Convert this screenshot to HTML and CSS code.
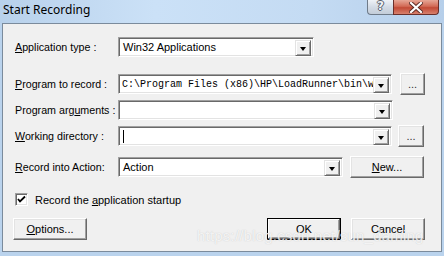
FILE: index.html
```html
<!DOCTYPE html>
<html lang="en">
<head>
    <meta charset="UTF-8">
    <title>Start Recording</title>
    <link rel="stylesheet" href="styles.css">
</head>
<body>
    <div class="window">
        <div class="titlebar">
            <div class="title">Start Recording</div>
            <div class="caption-btns">
                <div class="cap-help">?</div>
                <div class="cap-close">
                    <svg width="14" height="11" viewBox="0 0 14 11">
                        <path d="M2 1 L12 10 M12 1 L2 10" stroke="#5a2a24" stroke-width="4" stroke-linecap="square"/>
                        <path d="M2 1 L12 10 M12 1 L2 10" stroke="#fff" stroke-width="2.2" stroke-linecap="square"/>
                    </svg>
                </div>
            </div>
        </div>
        <div class="client">
            <div class="row row-1">
                <label class="lbl"><u>A</u>pplication type :</label>
                <div class="combo w-type">
                    <span class="combo-text">Win32 Applications</span>
                    <span class="drop"></span>
                </div>
            </div>
            <div class="row row-2">
                <label class="lbl"><u>P</u>rogram to record :</label>
                <div class="combo w-long">
                    <span class="combo-text mono">C:\Program Files (x86)\HP\LoadRunner\bin\wlrun.exe</span>
                    <span class="drop"></span>
                </div>
                <button class="btn btn-dots">...</button>
            </div>
            <div class="row row-3">
                <label class="lbl">Program arg<u>u</u>ments :</label>
                <div class="combo w-args">
                    <span class="combo-text"></span>
                    <span class="drop"></span>
                </div>
            </div>
            <div class="row row-4">
                <label class="lbl"><u>W</u>orking directory :</label>
                <div class="combo w-long">
                    <span class="combo-text"><span class="caret"></span></span>
                    <span class="drop"></span>
                </div>
                <button class="btn btn-dots btn-dots2">...</button>
            </div>
            <div class="row row-5">
                <label class="lbl"><u>R</u>ecord into Action:</label>
                <div class="combo w-action">
                    <span class="combo-text">Action</span>
                    <span class="drop"></span>
                </div>
                <button class="btn btn-new"><u>N</u>ew...</button>
            </div>
            <div class="check-row">
                <span class="checkbox">
                    <svg width="9" height="9" viewBox="0 0 9 9">
                        <path d="M1 4 L3 6.5 L8 1.5" stroke="#000" stroke-width="1.8" fill="none"/>
                    </svg>
                </span>
                <span class="check-lbl">Record the <u>a</u>pplication startup</span>
            </div>
            <div class="btn-row">
                <button class="btn btn-wide"><u>O</u>ptions...</button>
                <div class="spacer"></div>
                <button class="btn btn-wide btn-default">OK</button>
                <button class="btn btn-wide">Cancel</button>
            </div>
        </div>
        <div class="watermark">https://blog.csdn.net/sun_daming</div>
    </div>
</body>
</html>
```

FILE: styles.css
```css
body {
    margin: 0;
    font-family: "Liberation Sans", Arial, sans-serif;
    font-size: 11px;
    color: #000;
}
.window {
    position: relative;
    width: 444px;
    height: 256px;
    background-color: #bad3ed;
    overflow: hidden;
    display: flex;
    flex-direction: column;
}
.titlebar {
    height: 23px;
    display: flex;
    background: linear-gradient(to right, #b8d1eb, #cbe1f7 35%, #c4dbf3 70%, #b6cfea);
}
.title {
    flex: 1;
    padding-left: 3px;
    line-height: 20px;
    font-family: "Noto Sans", "Liberation Sans", sans-serif;
    font-size: 12px;
    color: #000;
}
.caption-btns {
    display: flex;
    align-items: flex-start;
    margin-right: 5px;
}
.cap-help {
    width: 25px;
    height: 14px;
    border: 1px solid #6f7b89;
    border-top: none;
    border-right: none;
    border-radius: 0 0 0 4px;
    background: linear-gradient(to bottom, #eef2f7, #d3dbe5 50%, #c3cdd9);
    font-family: "DejaVu Sans", sans-serif;
    font-weight: bold;
    font-size: 12px;
    line-height: 13px;
    text-align: center;
    color: #eef2f6;
    text-shadow: 1px 0 #58606b, -1px 0 #58606b, 0 1px #58606b, 0 -1px #58606b;
}
.cap-close {
    width: 44px;
    height: 14px;
    border: 1px solid #6a2f2a;
    border-top: none;
    border-radius: 0 0 4px 0;
    background: linear-gradient(to bottom, #e6a696, #d26a56 45%, #c24a36 55%, #d8806c);
    display: flex;
    align-items: center;
    justify-content: center;
}
.client {
    flex: 1;
    margin: 0 2px 4px 2px;
    border: 1px solid #7b8b9c;
    background-color: #f0f0f0;
    padding: 0 16px 0 10px;
}
.row {
    display: flex;
    align-items: center;
    height: 20px;
}
.row-1 { margin-top: 13px; }
.row-2 { margin-top: 17px; }
.row-3 { margin-top: 6px; }
.row-4 { margin-top: 6px; }
.row-5 { margin-top: 11px; }
.lbl {
    width: 103px;
    padding-left: 2px;
    flex-shrink: 0;
    white-space: nowrap;
    font-size: 10.7px;
}
.combo {
    box-sizing: border-box;
    height: 20px;
    display: flex;
    background: #fff;
    border: 1px solid;
    border-color: #a0a0a0 #fff #fff #a0a0a0;
    box-shadow: inset 1px 1px #696969, inset -1px -1px #e3e3e3;
    padding: 2px 2px 2px 2px;
}
.w-type { width: 196px; }
.w-long { width: 274px; }
.w-args { width: 275px; }
.w-action { width: 225px; }
.combo-text {
    flex: 1;
    overflow: hidden;
    white-space: nowrap;
    line-height: 15px;
    padding-left: 2px;
}
.mono {
    font-family: "Liberation Mono", "Courier New", monospace;
    font-size: 10px;
    padding-left: 1px;
}
.caret {
    display: inline-block;
    width: 1px;
    height: 13px;
    background: #000;
    vertical-align: middle;
    margin-top: -2px;
}
.drop {
    box-sizing: border-box;
    width: 16px;
    height: 16px;
    flex-shrink: 0;
    background: #f0f0f0;
    border: 1px solid;
    border-color: #e3e3e3 #696969 #696969 #e3e3e3;
    box-shadow: inset 1px 1px #fff, inset -1px -1px #a0a0a0;
    position: relative;
}
.drop::after {
    content: "";
    position: absolute;
    left: 4px;
    top: 6px;
    border-left: 3.5px solid transparent;
    border-right: 3.5px solid transparent;
    border-top: 4px solid #000;
}
.btn {
    box-sizing: border-box;
    height: 22px;
    padding: 0;
    background: #f0f0f0;
    border: 1px solid;
    border-color: #fff #696969 #696969 #fff;
    box-shadow: inset -1px -1px #a0a0a0, inset 1px 1px #e3e3e3;
    font-family: "Liberation Sans", Arial, sans-serif;
    font-size: 11px;
    color: #000;
    flex-shrink: 0;
}
.btn-dots {
    width: 25px;
    margin-left: 8px;
    color: #333;
    line-height: 20px;
    padding-bottom: 2px;
}
.btn-dots2 {
    width: 26px;
    margin-left: 6px;
}
.btn-new {
    width: 74px;
    margin-left: 7px;
}
.check-row {
    display: flex;
    align-items: center;
    margin-top: 16px;
    padding-left: 2px;
    height: 13px;
}
.checkbox {
    box-sizing: border-box;
    width: 13px;
    height: 13px;
    background: #fff;
    border: 1px solid;
    border-color: #a0a0a0 #fff #fff #a0a0a0;
    box-shadow: inset 1px 1px #696969, inset -1px -1px #e3e3e3;
    display: flex;
    align-items: center;
    justify-content: center;
}
.check-lbl {
    margin-left: 7px;
}
.btn-row {
    display: flex;
    margin-top: 12px;
}
.spacer {
    flex: 1;
}
.btn-wide {
    width: 74px;
}
.btn-default {
    margin-right: 10px;
    border-color: #000;
    box-shadow: inset -1px -1px #696969, inset 1px 1px #fff, inset -2px -2px #a0a0a0;
}
.watermark {
    position: absolute;
    left: 197px;
    top: 227px;
    font-family: "Liberation Sans", Arial, sans-serif;
    font-size: 15px;
    color: rgba(255, 255, 255, 0.8);
    text-shadow: 0 0 1px rgba(150, 150, 150, 0.5);
    letter-spacing: 0.2px;
    white-space: nowrap;
}
```
